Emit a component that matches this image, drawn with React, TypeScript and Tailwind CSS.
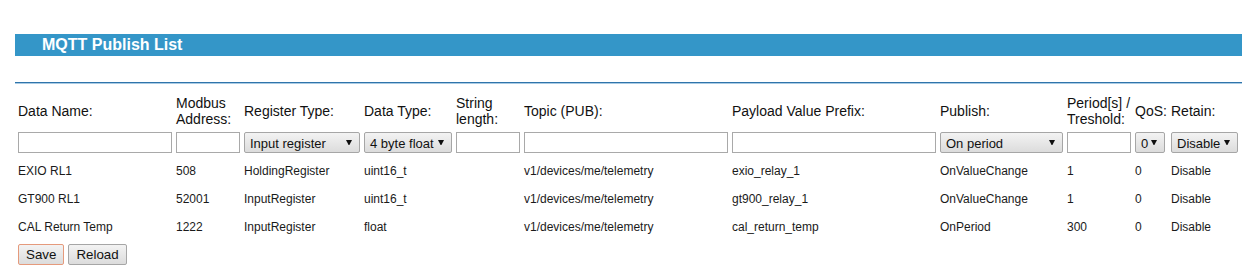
import React from 'react';

const COLS =
  'grid grid-cols-[154px_64px_116px_88px_64px_204px_204px_123px_64px_32px_67px] gap-x-[4px]';

const rows = [
  {
    name: 'EXIO RL1',
    address: '508',
    register: 'HoldingRegister',
    dataType: 'uint16_t',
    strLen: '',
    topic: 'v1/devices/me/telemetry',
    prefix: 'exio_relay_1',
    publish: 'OnValueChange',
    period: '1',
    qos: '0',
    retain: 'Disable',
  },
  {
    name: 'GT900 RL1',
    address: '52001',
    register: 'InputRegister',
    dataType: 'uint16_t',
    strLen: '',
    topic: 'v1/devices/me/telemetry',
    prefix: 'gt900_relay_1',
    publish: 'OnValueChange',
    period: '1',
    qos: '0',
    retain: 'Disable',
  },
  {
    name: 'CAL Return Temp',
    address: '1222',
    register: 'InputRegister',
    dataType: 'float',
    strLen: '',
    topic: 'v1/devices/me/telemetry',
    prefix: 'cal_return_temp',
    publish: 'OnPeriod',
    period: '300',
    qos: '0',
    retain: 'Disable',
  },
];

const TextBox = ({ className = '' }: { className?: string }) => (
  <input
    type="text"
    className={`h-[21px] border border-[#a9a9a9] bg-white px-[2px] text-[13.333px] outline-none ${className}`}
  />
);

const Select = ({ value, className = '' }: { value: string; className?: string }) => (
  <div
    className={`relative h-[21px] border border-[#a6a6a6] rounded-[2px] bg-gradient-to-b from-[#f3f3f3] to-[#dcdcdc] ${className}`}
  >
    <span className="absolute left-[5px] top-[1px] leading-[19px] text-[13px] text-[#111] whitespace-nowrap">
      {value}
    </span>
    <svg
      className="absolute right-[7px] top-[7px]"
      width="6"
      height="5"
      viewBox="0 0 6 5"
    >
      <path d="M0 0 H6 L3.4 5 H2.6 Z" fill="#111" />
    </svg>
  </div>
);

const Button = ({ label, focused }: { label: string; focused?: boolean }) => (
  <button
    className={`h-[21px] px-[7px] rounded-[2px] border text-[13.333px] leading-[19px] text-[#111] bg-gradient-to-b from-[#f3f3f3] to-[#dcdcdc] ${
      focused ? 'border-[#e59a7c]' : 'border-[#a6a6a6]'
    }`}
  >
    {label}
  </button>
);

export default function App() {
  return (
    <div className="w-[1258px] h-[277px] bg-white font-['Liberation_Sans',Arial,sans-serif] overflow-hidden">
      <div className="pt-[34px]">
        <div className="ml-[15px] w-[1227px] h-[22px] bg-[#3496c8] pl-[27px] text-white text-[16px] font-bold leading-[22px]">
          MQTT Publish List
        </div>
        <div className="ml-[15px] mt-[26px] w-[1227px] h-[2px] border-t border-[#2f74aa] border-b border-b-[#a9cbe4]" />
      </div>

      <div className="pl-[18px] pt-[11px]">
        <div className={`${COLS} h-[32px] items-center text-[14px] leading-[16px] text-[#111] whitespace-nowrap`}>
          <div>Data Name:</div>
          <div>
            Modbus
            <br />
            Address:
          </div>
          <div>Register Type:</div>
          <div>Data Type:</div>
          <div>
            String
            <br />
            length:
          </div>
          <div>Topic (PUB):</div>
          <div>Payload Value Prefix:</div>
          <div>Publish:</div>
          <div>
            Period[s] /
            <br />
            Treshold:
          </div>
          <div>QoS:</div>
          <div>Retain:</div>
        </div>

        <div className={`${COLS} mt-[5px] h-[21px]`}>
          <TextBox className="w-[154px]" />
          <TextBox className="w-[64px]" />
          <Select value="Input register" className="w-[116px]" />
          <Select value="4 byte float" className="w-[88px]" />
          <TextBox className="w-[64px]" />
          <TextBox className="w-[204px]" />
          <TextBox className="w-[204px]" />
          <Select value="On period" className="w-[123px]" />
          <TextBox className="w-[64px]" />
          <Select value="0" className="w-[30px]" />
          <Select value="Disable" className="w-[67px]" />
        </div>

        <div className="mt-[4px]">
          {rows.map((r, i) => (
            <div
              key={i}
              className={`${COLS} h-[28px] items-center text-[12px] leading-[28px] text-[#1a1a1a] whitespace-nowrap`}
            >
              <div>{r.name}</div>
              <div>{r.address}</div>
              <div>{r.register}</div>
              <div>{r.dataType}</div>
              <div>{r.strLen}</div>
              <div>{r.topic}</div>
              <div>{r.prefix}</div>
              <div>{r.publish}</div>
              <div>{r.period}</div>
              <div>{r.qos}</div>
              <div>{r.retain}</div>
            </div>
          ))}
        </div>

        <div className="mt-[3px] flex gap-[4px]">
          <Button label="Save" focused />
          <Button label="Reload" />
        </div>
      </div>
    </div>
  );
}
